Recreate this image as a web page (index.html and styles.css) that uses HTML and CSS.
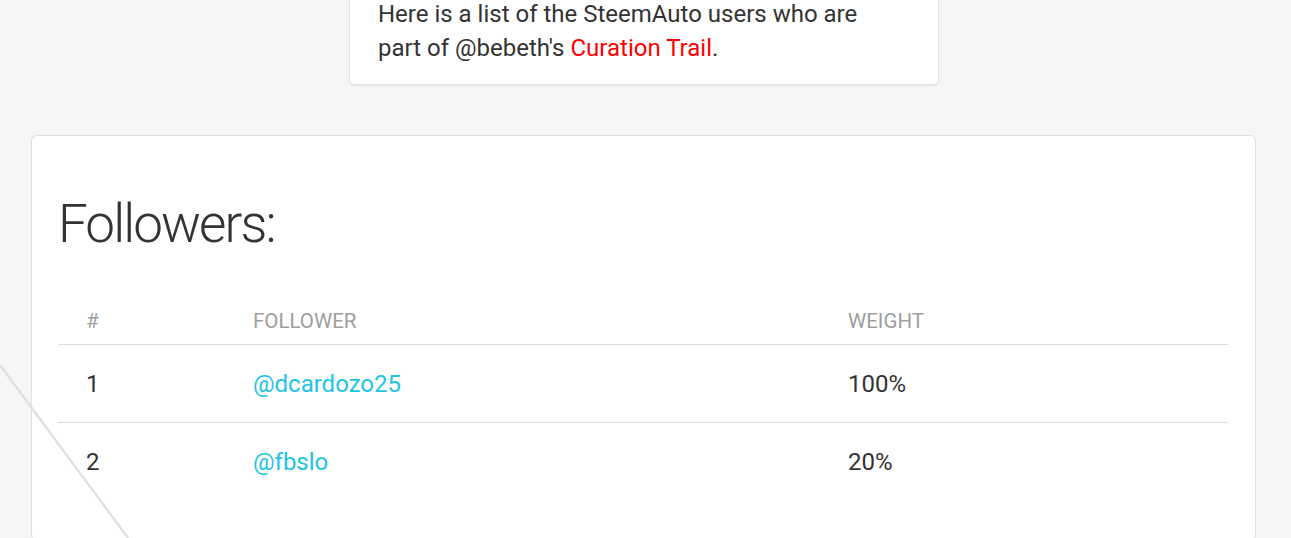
FILE: index.html
```html
<!DOCTYPE html>
<html>
<head>
<meta charset="utf-8">
<link rel="stylesheet" href="styles.css">
</head>
<body>
<div class="page">
  <div class="intro">
    <p>Here is a list of the SteemAuto users who are part of @bebeth's <span class="red">Curation Trail</span>.</p>
  </div>
  <div class="card">
    <h1>Followers:</h1>
    <table class="tbl">
      <thead>
        <tr><th class="c1">#</th><th class="c2">Follower</th><th class="c3">Weight</th></tr>
      </thead>
      <tbody>
        <tr><td>1</td><td><a href="#">@dcardozo25</a></td><td>100%</td></tr>
        <tr><td>2</td><td><a href="#">@fbslo</a></td><td>20%</td></tr>
      </tbody>
    </table>
  </div>
</div>
<svg class="deco" width="140" height="180" viewBox="0 0 140 180"><line x1="0" y1="0" x2="128" y2="173" stroke="#e0e0e0" stroke-width="2.4"/></svg>
</body>
</html>
```
FILE: styles.css
```css
html, body { margin: 0; padding: 0; }
body {
  background: #f6f6f6;
  font-family: Roboto, "Noto Sans", sans-serif;
  color: #333;
  height: 538px;
  overflow: hidden;
  position: relative;
}
.page {
  display: flex;
  flex-direction: column;
  align-items: center;
}
.intro {
  width: 532px;
  margin-top: -11px;
  padding: 7px 28px 19px 28px;
  background: #fff;
  border: 1px solid #e4e4e4;
  border-radius: 6px;
  box-shadow: 0 1px 2px rgba(0,0,0,0.08);
  margin-left: -3px;
}
.intro p {
  margin: 0;
  max-width: 505px;
  font-size: 24px;
  line-height: 34px;
}
.red { color: #ff0000; }
.card {
  align-self: stretch;
  margin: 50px 35px 0 31px;
  background: #fff;
  border: 1px solid #e0e0e0;
  border-radius: 6px;
  padding: 56px 27px 40px 26px;
}
h1 {
  margin: 0 0 41px 0;
  font-size: 53px;
  font-weight: 300;
  line-height: 64px;
  color: #333;
  letter-spacing: -1.9px;
}
.tbl {
  width: 100%;
  border-collapse: collapse;
}
.tbl th {
  text-align: left;
  font-weight: 400;
  font-size: 20.5px;
  color: #9e9e9e;
  text-transform: uppercase;
  height: 47px;
  padding: 0 0 0 28px;
  border-bottom: 1px solid #dcdcdc;
  vertical-align: middle;
}
.tbl .c1 { width: 139px; }
.tbl .c2 { width: 567px; }
.tbl td {
  font-size: 24px;
  height: 77px;
  padding: 0 0 0 28px;
  vertical-align: middle;
}
.tbl tbody tr:first-child td { border-bottom: 1px solid #dcdcdc; }
.tbl a { color: #22c4e4; text-decoration: none; }
.deco {
  position: absolute;
  left: 0;
  top: 365px;
}
```
